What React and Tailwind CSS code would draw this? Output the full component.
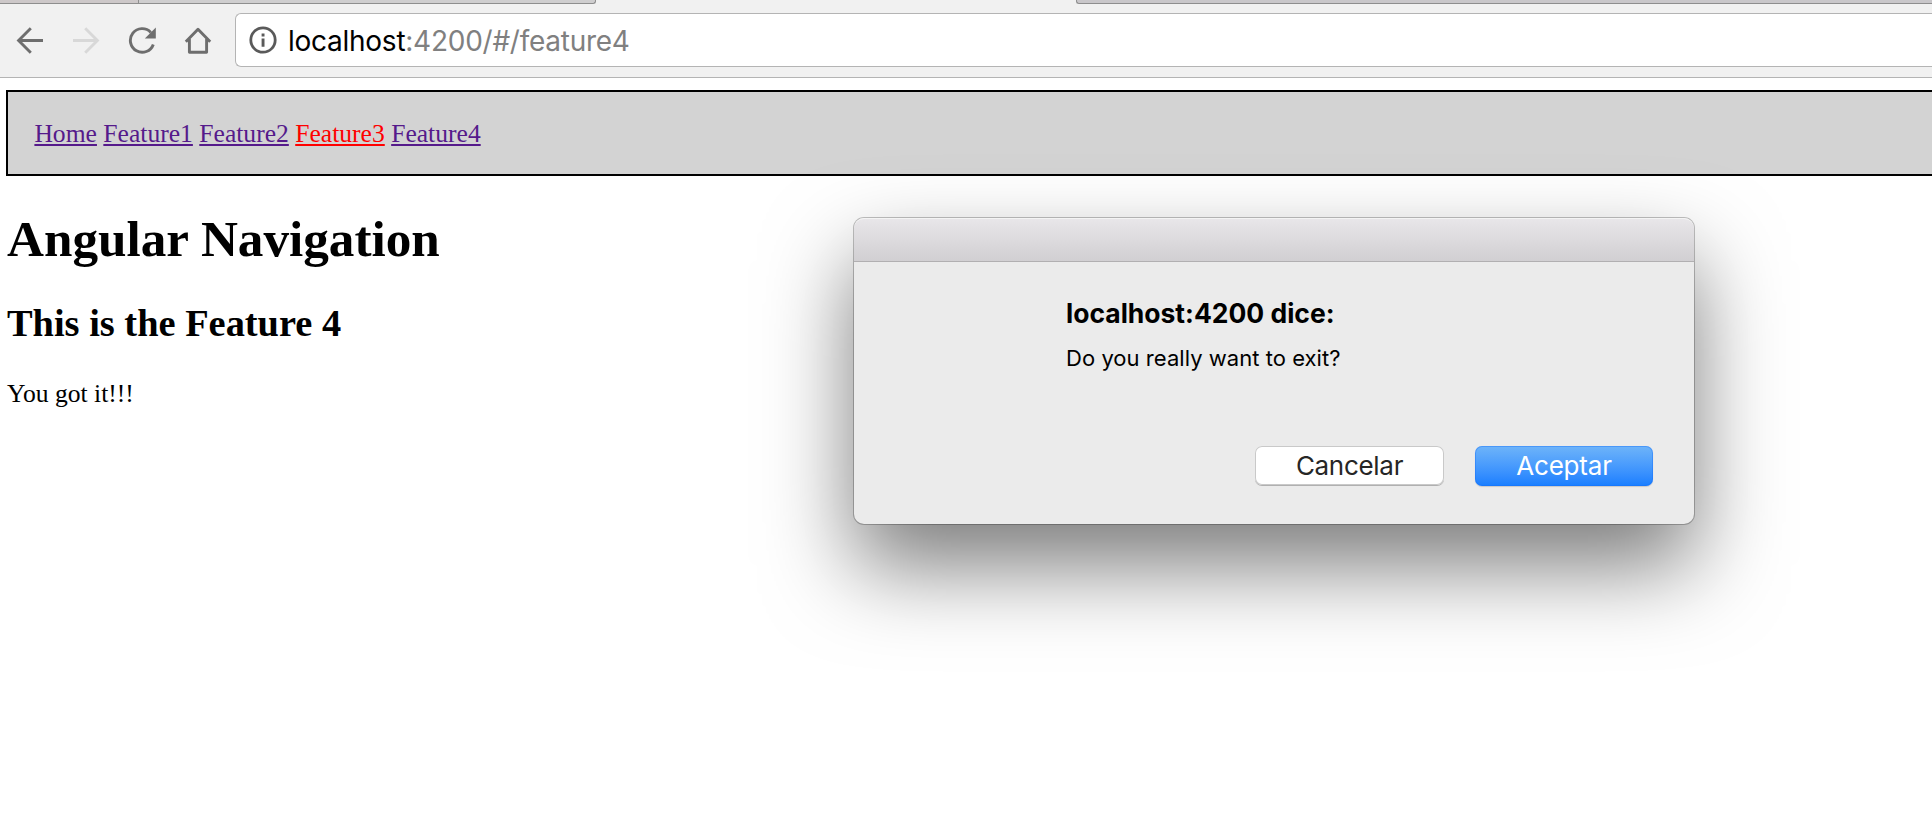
const links = [
  { label: 'Home' },
  { label: 'Feature1' },
  { label: 'Feature2' },
  { label: 'Feature3', active: true },
  { label: 'Feature4' },
];

function BackIcon({ className }) {
  return (
    <svg className={className} viewBox="0 0 28 28" fill="none" stroke="currentColor" strokeWidth="2.9">
      <path d="M27 14.5H3M14.8 2.3L2.6 14.5L14.8 26.7" />
    </svg>
  );
}

function ForwardIcon({ className }) {
  return (
    <svg className={className} viewBox="0 0 28 28" fill="none" stroke="currentColor" strokeWidth="2.9">
      <path d="M1 14.5H25M13.2 2.3L25.4 14.5L13.2 26.7" />
    </svg>
  );
}

function ReloadIcon() {
  return (
    <svg className="h-7 w-7 text-[#6e6e6e]" viewBox="0 0 28 28">
      <path d="M25.3 18.4A11.8 11.8 0 1 1 22.8 6.4" fill="none" stroke="currentColor" strokeWidth="2.9" />
      <path d="M27.8 1.6V12.6H16.8Z" fill="currentColor" />
    </svg>
  );
}

function HomeIcon() {
  return (
    <svg className="h-7 w-7 text-[#6e6e6e]" viewBox="0 0 28 28" fill="none" stroke="currentColor" strokeWidth="2.9">
      <path d="M1.8 15.8L14 3.2L26.2 15.8M5.4 13V26.2H22.6V13" strokeLinejoin="round" />
    </svg>
  );
}

function InfoIcon() {
  return (
    <svg className="h-7 w-7 text-[#5a5a5a]" viewBox="0 0 28 28">
      <circle cx="14" cy="14" r="12.2" fill="none" stroke="currentColor" strokeWidth="2.8" />
      <path d="M12.6 7.4h2.9v3h-2.9zM12.6 12.4h2.9v8.4h-2.9z" fill="currentColor" />
    </svg>
  );
}

function TabStrip() {
  return (
    <div className="flex h-1 justify-between bg-[#f1f1f1]">
      <div className="flex w-[596px] overflow-hidden rounded-br-[3px] border-r border-b border-[#8e8e8e] bg-[#cfcecf]">
        <div className="w-[139px] border-r border-[#8e8e8e] bg-[#cdc8c9]" />
      </div>
      <div className="w-[856px] rounded-bl-[3px] border-b border-l border-[#8e8e8e] bg-[#c9c7ca]" />
    </div>
  );
}

function Toolbar() {
  return (
    <div className="flex h-[74px] items-start border-b border-[#b4b4b4] bg-[#f1f1f1] pt-[9px] pl-4">
      <div className="flex gap-7 pt-[13px]">
        <BackIcon className="h-7 w-7 text-[#6e6e6e]" />
        <ForwardIcon className="h-7 w-7 text-[#d8d8d8]" />
        <ReloadIcon />
        <HomeIcon />
      </div>
      <div className="ml-[23px] flex h-[54px] flex-1 items-center rounded-l-[6px] border border-r-0 border-[#b4b4b4] bg-white pl-[13px]">
        <InfoIcon />
        <span className="ml-[11px] pt-0.5 font-['Inter',sans-serif] text-[28px] tracking-[-0.26px] text-black">
          localhost<span className="text-[#808080]">:4200/#/feature4</span>
        </span>
      </div>
    </div>
  );
}

function Dialog() {
  return (
    <div
      role="dialog"
      className="absolute top-[218px] left-[854px] h-[306px] w-[840px] rounded-[10px] bg-[#ebebeb] font-['Inter',sans-serif] text-black shadow-[0_0_0_1px_rgba(0,0,0,0.24),0_42px_88px_rgba(0,0,0,0.52)]"
    >
      <div className="h-11 rounded-t-[10px] border-t border-b border-t-[#f4f4f4] border-b-[#b1afb1] bg-linear-to-b from-[#e8e6e9] to-[#d1cfd2]" />
      <div className="pt-[33px] pl-[212px]">
        <div className="text-[26.5px] leading-9 font-bold tracking-[-0.01px] whitespace-nowrap">localhost:4200 dice:</div>
        <div className="mt-[13px] text-[22px] leading-7 tracking-[0.04px] whitespace-nowrap">Do you really want to exit?</div>
      </div>
      <div className="mt-[74px] flex justify-end gap-[31px] pr-[41px] text-[26px] leading-none">
        <button className="h-[39px] w-[189px] rounded-[7px] bg-white tracking-[-0.3px] text-[#262626] shadow-[inset_0_0_0_1px_#c9c9c9,0_1px_0_#b0b0b0]">
          Cancelar
        </button>
        <button className="h-10 w-[178px] rounded-[7px] bg-linear-to-b from-[#6eb4f9] to-[#187eff] tracking-[-0.2px] text-white shadow-[inset_0_0_0_1px_rgba(20,110,250,0.4),0_1px_1px_rgba(0,0,0,0.15)]">
          Aceptar
        </button>
      </div>
    </div>
  );
}

export default function App() {
  return (
    <div className="relative h-[824px] w-[1932px] overflow-hidden bg-white">
      <TabStrip />
      <Toolbar />
      <main className="pt-3 pl-1.5 font-['Liberation_Serif',serif] text-[25.6px] leading-[30px] text-black">
        <nav className="flex h-[86px] items-center gap-[6.4px] border-2 border-r-0 border-black bg-[#d3d3d3] pt-0.5 pl-[26.4px]">
          {links.map((link) => (
            <a
              key={link.label}
              href="#"
              className={
                link.active
                  ? 'text-[#ff0000] underline decoration-2 underline-offset-2'
                  : 'text-[#551a8b] underline decoration-2 underline-offset-2'
              }
            >
              {link.label}
            </a>
          ))}
        </nav>
        <div className="pl-px">
          <h1 className="mt-[34px] text-[51.2px] leading-[58px] font-bold">Angular Navigation</h1>
          <h2 className="mt-[33px] text-[38.4px] leading-[44px] font-bold">This is the Feature 4</h2>
          <p className="mt-[34px]">You got it!!!</p>
        </div>
      </main>
      <Dialog />
    </div>
  );
}
